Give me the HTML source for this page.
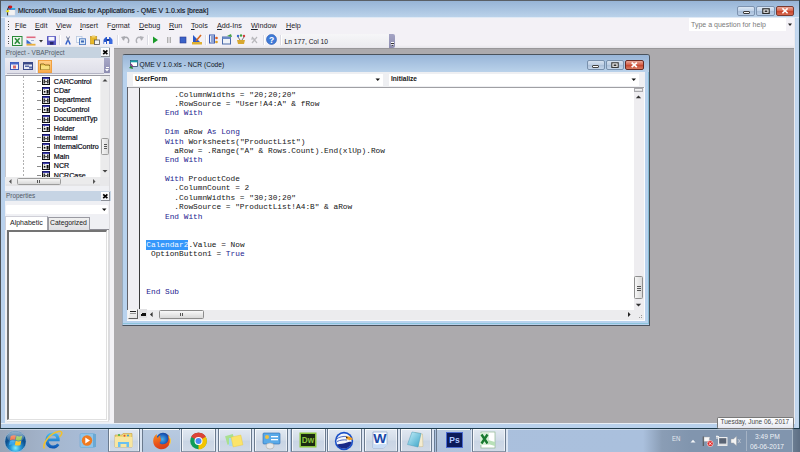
<!DOCTYPE html>
<html><head><meta charset="utf-8"><style>
*{margin:0;padding:0;box-sizing:border-box}
html,body{width:800px;height:452px;overflow:hidden;background:#aaa8ab;font-family:"Liberation Sans",sans-serif}
.a{position:absolute}
.t{position:absolute;white-space:pre;line-height:1}
.cl{position:absolute;left:146.3px;font-family:"Liberation Mono",monospace;font-size:7.81px;line-height:7.81px;white-space:pre;color:#151515}
.cl b{font-weight:normal;color:#23238f}
.sel{background:#3399ff;color:#e0ecff}
.u{text-decoration:underline;text-underline-offset:1px}
</style></head><body>
<div class="a" style="left:0px;top:0px;width:800px;height:429px;background:linear-gradient(90deg,#b9d1ec 0,#b9d1ec 795px,#c8dbf0 797px,#b9d1ec 799px)"></div>
<div class="a" style="left:0px;top:0px;width:800px;height:1px;background:#5a5f66"></div>
<div class="a" style="left:0px;top:0px;width:1px;height:429px;background:#4d5258"></div>
<div class="a" style="left:799px;top:0px;width:1px;height:429px;background:#2a4654"></div>
<div class="a" style="left:1px;top:1px;width:798px;height:16px;background:linear-gradient(#97b4d6,#bad2ea)"></div>
<div class="a" style="left:1px;top:17px;width:798px;height:1px;background:#dfe9f5"></div>
<div class="a" style="left:5px;top:18px;width:790px;height:30px;background:linear-gradient(#f3f1f6 0,#f3f1f6 27px,#e6e5ea 30px)"></div>
<div class="a" style="left:114px;top:48px;width:680px;height:375px;background:#acaaad"></div>
<div class="a" style="left:114px;top:48px;width:680px;height:1px;background:#98979a"></div>
<div class="a" style="left:5px;top:48px;width:109px;height:375px;background:#eff0f4"></div>
<div class="a" style="left:794px;top:18px;width:1px;height:405px;background:#ecebef"></div>
<div class="a" style="left:1px;top:423px;width:794px;height:1px;background:#e8eef6"></div>
<div class="a" style="left:0px;top:428px;width:800px;height:1px;background:#2a4a5c"></div>
<svg class="a" style="left:5px;top:5px;" width="12" height="11" viewBox="0 0 12 11"><rect x="3" y="4.3" width="7" height="5.8" fill="#f2f2f2" stroke="#d8d8e0" stroke-width="0.4"/><rect x="3" y="3.2" width="7.2" height="1.5" fill="#2a4ab8"/><rect x="6.2" y="3.2" width="3.8" height="1.2" fill="#20c8e8"/><ellipse cx="5.2" cy="2" rx="2.1" ry="1.4" fill="#d01818"/><path d="M4 1.5 L2.6 3.8" stroke="#111" stroke-width="0.8"/><rect x="2.2" y="4" width="0.9" height="6.4" fill="#151515"/><path d="M0.5 6.2 L3.2 4.6 L4.6 6.6 L2.4 7.6Z" fill="#e8e020"/></svg>
<div class="t" style="left:18px;top:8.02px;font-size:6.95px;color:#10131a;font-family:'Liberation Sans',sans-serif;-webkit-text-stroke:0.15px #10131a">Microsoft Visual Basic for Applications - QME V 1.0.xls [break]</div>
<div class="a" style="left:737px;top:6px;width:18px;height:10px;border:1px solid #7d93b0;border-radius:2px;background:linear-gradient(#dde8f4,#c2d4ea 45%,#a9bfda 55%,#bcd0e8)"></div>
<div class="a" style="left:742.5px;top:10.5px;width:7px;height:3px;background:#fafafa;border:1px solid #3a3a3a;border-radius:1px"></div>
<div class="a" style="left:756px;top:6px;width:19px;height:10px;border:1px solid #7d93b0;border-radius:2px;background:linear-gradient(#dde8f4,#c2d4ea 45%,#a9bfda 55%,#bcd0e8)"></div>
<svg class="a" style="left:761.5px;top:8px;" width="8" height="6" viewBox="0 0 8 6"><rect x="0.8" y="0.8" width="6.4" height="4.6" fill="#fafafa" stroke="#2a2a2a" stroke-width="1.2"/><rect x="2.6" y="2.4" width="2.8" height="1.6" fill="#333"/></svg>
<div class="a" style="left:776px;top:6px;width:18px;height:10px;border:1px solid #7a3a30;border-radius:2px;background:linear-gradient(#eba898,#d86850 45%,#c8442c 55%,#d86a50)"></div>
<svg class="a" style="left:776px;top:6px;" width="18" height="10" viewBox="0 0 18 10"><path d="M6.4 2.4 L11.6 7.2 M11.6 2.4 L6.4 7.2" stroke="#fff" stroke-width="1.5"/></svg>
<div class="a" style="left:8px;top:21px;width:1px;height:1px;background:#555"></div>
<div class="a" style="left:8px;top:23.5px;width:1px;height:1px;background:#555"></div>
<div class="a" style="left:8px;top:26px;width:1px;height:1px;background:#555"></div>
<div class="a" style="left:8px;top:28.5px;width:1px;height:1px;background:#555"></div>
<div class="t" style="left:15px;top:22.21px;font-size:7.2px;color:#1e2129;font-family:'Liberation Sans',sans-serif;"><span class="u">F</span>ile</div>
<div class="t" style="left:35px;top:22.21px;font-size:7.2px;color:#1e2129;font-family:'Liberation Sans',sans-serif;"><span class="u">E</span>dit</div>
<div class="t" style="left:56px;top:22.21px;font-size:7.2px;color:#1e2129;font-family:'Liberation Sans',sans-serif;"><span class="u">V</span>iew</div>
<div class="t" style="left:80px;top:22.21px;font-size:7.2px;color:#1e2129;font-family:'Liberation Sans',sans-serif;"><span class="u">I</span>nsert</div>
<div class="t" style="left:107px;top:22.21px;font-size:7.2px;color:#1e2129;font-family:'Liberation Sans',sans-serif;">F<span class="u">o</span>rmat</div>
<div class="t" style="left:139px;top:22.21px;font-size:7.2px;color:#1e2129;font-family:'Liberation Sans',sans-serif;"><span class="u">D</span>ebug</div>
<div class="t" style="left:169px;top:22.21px;font-size:7.2px;color:#1e2129;font-family:'Liberation Sans',sans-serif;"><span class="u">R</span>un</div>
<div class="t" style="left:191px;top:22.21px;font-size:7.2px;color:#1e2129;font-family:'Liberation Sans',sans-serif;"><span class="u">T</span>ools</div>
<div class="t" style="left:217px;top:22.21px;font-size:7.2px;color:#1e2129;font-family:'Liberation Sans',sans-serif;"><span class="u">A</span>dd-Ins</div>
<div class="t" style="left:251px;top:22.21px;font-size:7.2px;color:#1e2129;font-family:'Liberation Sans',sans-serif;"><span class="u">W</span>indow</div>
<div class="t" style="left:286px;top:22.21px;font-size:7.2px;color:#1e2129;font-family:'Liberation Sans',sans-serif;"><span class="u">H</span>elp</div>
<div class="a" style="left:689px;top:18px;width:97px;height:13px;background:#fff"></div>
<div class="t" style="left:691px;top:21.35px;font-size:7.03px;color:#7a7a7a;font-family:'Liberation Sans',sans-serif;">Type a question for help</div>
<svg class="a" style="left:788px;top:23px;" width="5" height="4" viewBox="0 0 5 4"><path d="M0 0.5 H4 L2 3Z" fill="#222"/></svg>
<div class="a" style="left:8px;top:35.5px;width:1px;height:1px;background:#555"></div>
<div class="a" style="left:8px;top:38px;width:1px;height:1px;background:#555"></div>
<div class="a" style="left:8px;top:40.5px;width:1px;height:1px;background:#555"></div>
<div class="a" style="left:8px;top:43px;width:1px;height:1px;background:#555"></div>
<svg class="a" style="left:12px;top:35.5px;" width="10.5" height="10" viewBox="0 0 10.5 10"><rect x="0.5" y="0.5" width="9.5" height="9" fill="#eef6ee" stroke="#2a8a3a" stroke-width="1"/><path d="M3 2.2 L7.8 7.8 M7.6 2.2 L2.8 7.8" stroke="#2a8a38" stroke-width="1.5"/></svg>
<svg class="a" style="left:26px;top:35.5px;" width="10" height="10" viewBox="0 0 10 10"><rect x="0.5" y="0.5" width="9" height="1.8" fill="#e06a80"/><rect x="0.5" y="2.3" width="9" height="5.5" fill="#eef2f8"/><path d="M0.5 3.5 L6 7.8 H0.5Z" fill="#3a6ad0"/><rect x="0.5" y="7.8" width="9" height="1.8" fill="#e8b040"/><path d="M5 4.5 H8" stroke="#8aa0c8" stroke-width="0.8"/></svg>
<svg class="a" style="left:39px;top:39.5px;" width="4" height="3" viewBox="0 0 4 3"><path d="M0 0 H4 L2 2.5Z" fill="#333"/></svg>
<svg class="a" style="left:46.5px;top:36px;" width="9" height="9" viewBox="0 0 9 9"><rect x="0" y="0" width="9" height="9" rx="0.6" fill="#5656c0"/><rect x="1.5" y="0.8" width="6" height="3.8" fill="#f6f6ff"/><rect x="3" y="6" width="3.5" height="2.6" fill="#26266a"/></svg>
<div class="a" style="left:59px;top:35px;width:1px;height:10px;background:#dcdce4"></div>
<div class="a" style="left:60px;top:35px;width:1px;height:10px;background:#fff"></div>
<svg class="a" style="left:64px;top:36px;" width="8" height="9" viewBox="0 0 8 9"><path d="M2.5 0.5 L4.5 5 M5.5 0.5 L3.5 5" stroke="#5a6a90" stroke-width="0.9"/><path d="M3.5 4.5 L1.8 8.5" stroke="#2a5ac8" stroke-width="1.4"/><path d="M4.5 4.5 L6.2 8.5" stroke="#2a5ac8" stroke-width="1.4"/></svg>
<svg class="a" style="left:76px;top:36px;" width="10" height="9" viewBox="0 0 10 9"><rect x="0.5" y="0.5" width="5.5" height="6" fill="#f4f8fc" stroke="#b8c8e0" stroke-width="0.8"/><rect x="3.5" y="2.8" width="6" height="5.8" fill="#dce8f6" stroke="#4a78c0" stroke-width="0.9"/><rect x="5" y="4.5" width="3" height="2" fill="#3a68b8"/></svg>
<svg class="a" style="left:90px;top:35px;" width="10" height="10" viewBox="0 0 10 10"><rect x="0.3" y="1.5" width="6.5" height="7.5" fill="#e8b828" stroke="#b88a10" stroke-width="0.5"/><rect x="2" y="0.5" width="3.2" height="2" fill="#f0d070"/><rect x="4.5" y="5" width="5" height="4.5" fill="#f4f4f4" stroke="#555" stroke-width="0.8"/></svg>
<svg class="a" style="left:103px;top:36px;" width="10" height="9" viewBox="0 0 10 9"><path d="M1 3 L3 1 H4 V8 H0.5 V4Z" fill="#2a5ad0"/><path d="M9 3 L7 1 H6 V8 H9.5 V4Z" fill="#3a6ae0"/><rect x="3.5" y="3" width="3" height="2" fill="#1a3a98"/><rect x="1.2" y="6" width="1.8" height="2" fill="#fff"/></svg>
<div class="a" style="left:117px;top:35px;width:1px;height:10px;background:#dcdce4"></div>
<div class="a" style="left:118px;top:35px;width:1px;height:10px;background:#fff"></div>
<svg class="a" style="left:121px;top:35px;" width="9" height="10" viewBox="0 0 9 10"><path d="M7 8 C9 4 6 1 3 3 L2 5" stroke="#a8a8ae" stroke-width="1.4" fill="none"/><path d="M0 2 L3 6 L4 1Z" fill="#a8a8ae"/></svg>
<svg class="a" style="left:135px;top:35px;" width="9" height="10" viewBox="0 0 9 10"><path d="M2 8 C0 4 3 1 6 3 L7 5" stroke="#b0b0b6" stroke-width="1.4" fill="none"/><path d="M9 2 L6 6 L5 1Z" fill="#b0b0b6"/></svg>
<div class="a" style="left:147px;top:35px;width:1px;height:10px;background:#dcdce4"></div>
<div class="a" style="left:148px;top:35px;width:1px;height:10px;background:#fff"></div>
<svg class="a" style="left:152px;top:35px;" width="7" height="10" viewBox="0 0 7 10"><path d="M1 1.5 L6 5 L1 8.5Z" fill="#1a9a2a"/></svg>
<svg class="a" style="left:166px;top:35px;" width="6" height="10" viewBox="0 0 6 10"><rect x="1" y="2" width="1.4" height="6" fill="#b0b0b0"/><rect x="3.6" y="2" width="1.4" height="6" fill="#b0b0b0"/></svg>
<svg class="a" style="left:179px;top:35px;" width="8" height="10" viewBox="0 0 8 10"><rect x="1" y="2" width="6" height="6" fill="#3a62c8" stroke="#2a3a90" stroke-width="0.6"/></svg>
<svg class="a" style="left:192px;top:34px;" width="11" height="11" viewBox="0 0 11 11"><path d="M1 1 L1 8 L8 8Z" fill="#2a58c8"/><path d="M4 7 L9 1" stroke="#d86a20" stroke-width="1.6"/><rect x="0" y="8" width="10" height="2.5" fill="#e0b030"/></svg>
<div class="a" style="left:205px;top:35px;width:1px;height:10px;background:#dcdce4"></div>
<div class="a" style="left:206px;top:35px;width:1px;height:10px;background:#fff"></div>
<svg class="a" style="left:209px;top:34px;" width="10" height="11" viewBox="0 0 10 11"><rect x="0.5" y="1" width="5" height="8" fill="#e8eef8" stroke="#3a5ab0"/><path d="M2 3 H5 M2 5 H5 M2 7 H5" stroke="#3a5ab0"/><circle cx="7.5" cy="4" r="1.3" fill="#e06020"/><circle cx="7.5" cy="8" r="1.3" fill="#e0a020"/></svg>
<svg class="a" style="left:222px;top:34px;" width="10" height="11" viewBox="0 0 10 11"><rect x="0.5" y="3" width="8" height="7" fill="#eef2f8" stroke="#4a6aa8"/><rect x="0.5" y="3" width="8" height="2" fill="#6a8ac8"/><path d="M5 2 L9 0 L10 3Z" fill="#40a040"/></svg>
<svg class="a" style="left:236px;top:34px;" width="10" height="11" viewBox="0 0 10 11"><path d="M1 6 H9 L8 10 H2Z" fill="#d8a830"/><circle cx="2" cy="2" r="1.2" fill="#3a6ad0"/><circle cx="5" cy="1.5" r="1.2" fill="#40a040"/><circle cx="8" cy="2" r="1.2" fill="#d04040"/><path d="M2 3 L4 6 M8 3 L6 6" stroke="#777"/></svg>
<svg class="a" style="left:250px;top:35px;" width="9" height="10" viewBox="0 0 9 10"><path d="M2 2 L7 8 M7 2 L2 8 M1 4 H5" stroke="#b8b8bc" stroke-width="1.2"/></svg>
<div class="a" style="left:263px;top:35px;width:1px;height:10px;background:#dcdce4"></div>
<div class="a" style="left:264px;top:35px;width:1px;height:10px;background:#fff"></div>
<svg class="a" style="left:266px;top:34px;" width="11" height="11" viewBox="0 0 11 11"><circle cx="5.5" cy="5.5" r="5" fill="#3f7ad8" stroke="#2a5ab0" stroke-width="0.6"/><text x="5.5" y="8.6" font-size="8.5" font-family="Liberation Sans" font-weight="bold" fill="#fff" text-anchor="middle">?</text></svg>
<div class="a" style="left:280px;top:35px;width:1px;height:10px;background:#dcdce4"></div>
<div class="a" style="left:281px;top:35px;width:1px;height:10px;background:#fff"></div>
<div class="a" style="left:282px;top:34px;width:107px;height:12px;background:linear-gradient(#f6f6f8,#ececf0)"></div>
<div class="t" style="left:284.5px;top:38.73px;font-size:6.7px;color:#15151c;font-family:'Liberation Sans',sans-serif;">Ln 177, Col 10</div>
<div class="a" style="left:389px;top:34px;width:6px;height:14px;background:linear-gradient(#a4a4c4,#8c8cb0);border-radius:0 2px 2px 0"></div>
<div class="a" style="left:390.5px;top:42px;width:3.2px;height:1px;background:#fff"></div>
<div class="a" style="left:390.5px;top:43px;width:3.2px;height:0.8px;background:#333"></div>
<svg class="a" style="left:390px;top:44.3px;" width="5" height="3" viewBox="0 0 5 3"><path d="M0.5 0.3 H4.2 L2.35 2.4Z" fill="#fff"/><path d="M1.2 0.9 H3.5 L2.35 2.2Z" fill="#333"/></svg>
<div class="a" style="left:5px;top:47px;width:106px;height:11px;background:#c6d3e0"></div>
<div class="t" style="left:5.7px;top:49.52px;font-size:6.47px;color:#525a66;font-family:'Liberation Sans',sans-serif;">Project - VBAProject</div>
<div class="a" style="left:101px;top:48px;width:9px;height:8.5px;background:linear-gradient(#ffffff,#f0f2f6);border-right:1px solid #8c9098;border-bottom:1px solid #8c9098"></div>
<svg class="a" style="left:101px;top:48px;" width="9" height="9" viewBox="0 0 9 9"><path d="M2.2 2.4 L6.4 6.2 M6.4 2.4 L2.2 6.2" stroke="#000" stroke-width="1.7"/></svg>
<div class="a" style="left:5px;top:58px;width:106px;height:16px;background:linear-gradient(#ececf2,#dedee8)"></div>
<div class="a" style="left:7px;top:73px;width:97px;height:1px;background:#b4b4c4"></div>
<svg class="a" style="left:10px;top:62px;" width="9" height="8" viewBox="0 0 9 8"><rect x="0.5" y="0.5" width="8" height="7" fill="#f4f0f4" stroke="#3a5ab8"/><rect x="0.5" y="0.5" width="8" height="2" fill="#4a6ac8"/><rect x="3" y="3.5" width="3" height="3" fill="#d86a6a"/></svg>
<svg class="a" style="left:23px;top:62px;" width="10" height="8" viewBox="0 0 10 8"><rect x="0.5" y="0.5" width="9" height="7" fill="#e8ecf4" stroke="#3a4a88"/><rect x="0.5" y="0.5" width="9" height="2" fill="#3a4a88"/><rect x="2" y="3.5" width="4" height="1.5" fill="#5a6aa8"/><rect x="6" y="4.5" width="3" height="2" fill="#5a6aa8"/></svg>
<div class="a" style="left:36px;top:60px;width:1px;height:13px;background:#fafafc"></div>
<div class="a" style="left:38px;top:60px;width:14px;height:13px;background:linear-gradient(#ffd089,#f9a94a);border:1px solid #f0a040"></div>
<svg class="a" style="left:40px;top:63px;" width="10" height="7" viewBox="0 0 10 7"><path d="M0.5 1 H4 L5 2 H9.5 V6.5 H0.5Z" fill="#f2d060" stroke="#7a5a10" stroke-width="0.8"/><rect x="1" y="3" width="8.5" height="3.5" fill="#f8e080"/></svg>
<div class="a" style="left:104px;top:58px;width:7px;height:15px;background:linear-gradient(#a8a8c8,#8c8cb0);border-radius:0 2px 2px 0"></div>
<div class="a" style="left:105.5px;top:67px;width:3px;height:1px;background:#fff"></div>
<svg class="a" style="left:105px;top:68.5px;" width="4" height="3" viewBox="0 0 4 3"><path d="M0 0 H4 L2 2.5Z" fill="#fff"/></svg>
<div class="a" style="left:5px;top:75px;width:105px;height:111px;background:#fff;border-top:1px solid #9a9aa2;border-left:1px solid #c8c8cc"></div>
<div class="a" style="left:23px;top:76px;width:1px;height:101px;background:repeating-linear-gradient(#b0b0b0 0 2px,transparent 2px 3.5px)"></div>
<div class="a" style="left:36.5px;top:81.0px;width:4px;height:1px;background:#8a8a8a"></div>
<svg class="a" style="left:42px;top:77.2px;" width="8" height="8" viewBox="0 0 8 8"><rect x="0.5" y="0.5" width="7" height="7" fill="#f0f0f0" stroke="#111"/><rect x="0.5" y="0.3" width="7" height="1.5" fill="#1a1aa0"/><rect x="1.5" y="2.5" width="1.6" height="4" fill="#333"/><rect x="5" y="2.5" width="1.6" height="4" fill="#333"/><rect x="2.5" y="4" width="3" height="1.2" fill="#555"/></svg>
<div class="t" style="left:53.8px;top:78.69px;font-size:7.1px;color:#0a0a14;font-family:'Liberation Sans',sans-serif;-webkit-text-stroke:0.2px #0a0a14">CARControl</div>
<div class="a" style="left:36.5px;top:90.4px;width:4px;height:1px;background:#8a8a8a"></div>
<svg class="a" style="left:42px;top:86.60000000000001px;" width="8" height="8" viewBox="0 0 8 8"><rect x="0.5" y="0.5" width="7" height="7" fill="#f0f0f0" stroke="#111"/><rect x="0.5" y="0.3" width="7" height="1.5" fill="#1a1aa0"/><rect x="1.8" y="4" width="1.6" height="1.6" fill="#111"/><rect x="4.6" y="3" width="2" height="3.6" fill="#111"/><rect x="1.8" y="2.4" width="1.2" height="0.8" fill="#666"/></svg>
<div class="t" style="left:53.8px;top:88.09px;font-size:7.1px;color:#0a0a14;font-family:'Liberation Sans',sans-serif;-webkit-text-stroke:0.2px #0a0a14">CDar</div>
<div class="a" style="left:36.5px;top:99.8px;width:4px;height:1px;background:#8a8a8a"></div>
<svg class="a" style="left:42px;top:96.0px;" width="8" height="8" viewBox="0 0 8 8"><rect x="0.5" y="0.5" width="7" height="7" fill="#f0f0f0" stroke="#111"/><rect x="0.5" y="0.3" width="7" height="1.5" fill="#1a1aa0"/><rect x="1.5" y="2.5" width="1.6" height="4" fill="#333"/><rect x="5" y="2.5" width="1.6" height="4" fill="#333"/><rect x="2.5" y="4" width="3" height="1.2" fill="#555"/></svg>
<div class="t" style="left:53.8px;top:97.49px;font-size:7.1px;color:#0a0a14;font-family:'Liberation Sans',sans-serif;-webkit-text-stroke:0.2px #0a0a14">Department</div>
<div class="a" style="left:36.5px;top:109.2px;width:4px;height:1px;background:#8a8a8a"></div>
<svg class="a" style="left:42px;top:105.4px;" width="8" height="8" viewBox="0 0 8 8"><rect x="0.5" y="0.5" width="7" height="7" fill="#f0f0f0" stroke="#111"/><rect x="0.5" y="0.3" width="7" height="1.5" fill="#1a1aa0"/><rect x="1.8" y="4" width="1.6" height="1.6" fill="#111"/><rect x="4.6" y="3" width="2" height="3.6" fill="#111"/><rect x="1.8" y="2.4" width="1.2" height="0.8" fill="#666"/></svg>
<div class="t" style="left:53.8px;top:106.89px;font-size:7.1px;color:#0a0a14;font-family:'Liberation Sans',sans-serif;-webkit-text-stroke:0.2px #0a0a14">DocControl</div>
<div class="a" style="left:36.5px;top:118.60000000000001px;width:4px;height:1px;background:#8a8a8a"></div>
<svg class="a" style="left:42px;top:114.80000000000001px;" width="8" height="8" viewBox="0 0 8 8"><rect x="0.5" y="0.5" width="7" height="7" fill="#f0f0f0" stroke="#111"/><rect x="0.5" y="0.3" width="7" height="1.5" fill="#1a1aa0"/><rect x="1.5" y="2.5" width="1.6" height="4" fill="#333"/><rect x="5" y="2.5" width="1.6" height="4" fill="#333"/><rect x="2.5" y="4" width="3" height="1.2" fill="#555"/></svg>
<div class="t" style="left:53.8px;top:116.29px;font-size:7.1px;color:#0a0a14;font-family:'Liberation Sans',sans-serif;-webkit-text-stroke:0.2px #0a0a14">DocumentTyp</div>
<div class="a" style="left:36.5px;top:127.99999999999999px;width:4px;height:1px;background:#8a8a8a"></div>
<svg class="a" style="left:42px;top:124.19999999999999px;" width="8" height="8" viewBox="0 0 8 8"><rect x="0.5" y="0.5" width="7" height="7" fill="#f0f0f0" stroke="#111"/><rect x="0.5" y="0.3" width="7" height="1.5" fill="#1a1aa0"/><rect x="1.8" y="4" width="1.6" height="1.6" fill="#111"/><rect x="4.6" y="3" width="2" height="3.6" fill="#111"/><rect x="1.8" y="2.4" width="1.2" height="0.8" fill="#666"/></svg>
<div class="t" style="left:53.8px;top:125.69px;font-size:7.1px;color:#0a0a14;font-family:'Liberation Sans',sans-serif;-webkit-text-stroke:0.2px #0a0a14">Holder</div>
<div class="a" style="left:36.5px;top:137.40000000000003px;width:4px;height:1px;background:#8a8a8a"></div>
<svg class="a" style="left:42px;top:133.60000000000002px;" width="8" height="8" viewBox="0 0 8 8"><rect x="0.5" y="0.5" width="7" height="7" fill="#f0f0f0" stroke="#111"/><rect x="0.5" y="0.3" width="7" height="1.5" fill="#1a1aa0"/><rect x="1.5" y="2.5" width="1.6" height="4" fill="#333"/><rect x="5" y="2.5" width="1.6" height="4" fill="#333"/><rect x="2.5" y="4" width="3" height="1.2" fill="#555"/></svg>
<div class="t" style="left:53.8px;top:135.09px;font-size:7.1px;color:#0a0a14;font-family:'Liberation Sans',sans-serif;-webkit-text-stroke:0.2px #0a0a14">Internal</div>
<div class="a" style="left:36.5px;top:146.8px;width:4px;height:1px;background:#8a8a8a"></div>
<svg class="a" style="left:42px;top:143.0px;" width="8" height="8" viewBox="0 0 8 8"><rect x="0.5" y="0.5" width="7" height="7" fill="#f0f0f0" stroke="#111"/><rect x="0.5" y="0.3" width="7" height="1.5" fill="#1a1aa0"/><rect x="1.8" y="4" width="1.6" height="1.6" fill="#111"/><rect x="4.6" y="3" width="2" height="3.6" fill="#111"/><rect x="1.8" y="2.4" width="1.2" height="0.8" fill="#666"/></svg>
<div class="t" style="left:53.8px;top:144.49px;font-size:7.1px;color:#0a0a14;font-family:'Liberation Sans',sans-serif;-webkit-text-stroke:0.2px #0a0a14">InternalContro</div>
<div class="a" style="left:36.5px;top:156.20000000000002px;width:4px;height:1px;background:#8a8a8a"></div>
<svg class="a" style="left:42px;top:152.4px;" width="8" height="8" viewBox="0 0 8 8"><rect x="0.5" y="0.5" width="7" height="7" fill="#f0f0f0" stroke="#111"/><rect x="0.5" y="0.3" width="7" height="1.5" fill="#1a1aa0"/><rect x="1.5" y="2.5" width="1.6" height="4" fill="#333"/><rect x="5" y="2.5" width="1.6" height="4" fill="#333"/><rect x="2.5" y="4" width="3" height="1.2" fill="#555"/></svg>
<div class="t" style="left:53.8px;top:153.89px;font-size:7.1px;color:#0a0a14;font-family:'Liberation Sans',sans-serif;-webkit-text-stroke:0.2px #0a0a14">Main</div>
<div class="a" style="left:36.5px;top:165.60000000000002px;width:4px;height:1px;background:#8a8a8a"></div>
<svg class="a" style="left:42px;top:161.8px;" width="8" height="8" viewBox="0 0 8 8"><rect x="0.5" y="0.5" width="7" height="7" fill="#f0f0f0" stroke="#111"/><rect x="0.5" y="0.3" width="7" height="1.5" fill="#1a1aa0"/><rect x="1.8" y="4" width="1.6" height="1.6" fill="#111"/><rect x="4.6" y="3" width="2" height="3.6" fill="#111"/><rect x="1.8" y="2.4" width="1.2" height="0.8" fill="#666"/></svg>
<div class="t" style="left:53.8px;top:163.29px;font-size:7.1px;color:#0a0a14;font-family:'Liberation Sans',sans-serif;-webkit-text-stroke:0.2px #0a0a14">NCR</div>
<div class="a" style="left:36.5px;top:175.0px;width:4px;height:1px;background:#8a8a8a"></div>
<svg class="a" style="left:42px;top:171.2px;" width="8" height="8" viewBox="0 0 8 8"><rect x="0.5" y="0.5" width="7" height="7" fill="#f0f0f0" stroke="#111"/><rect x="0.5" y="0.3" width="7" height="1.5" fill="#1a1aa0"/><rect x="1.5" y="2.5" width="1.6" height="4" fill="#333"/><rect x="5" y="2.5" width="1.6" height="4" fill="#333"/><rect x="2.5" y="4" width="3" height="1.2" fill="#555"/></svg>
<div class="t" style="left:53.8px;top:172.69px;font-size:7.1px;color:#0a0a14;font-family:'Liberation Sans',sans-serif;-webkit-text-stroke:0.2px #0a0a14">NCRCase</div>
<div class="a" style="left:100px;top:76px;width:10px;height:101px;background:#ebebec;border-left:1px solid #f2f2f2"></div>
<svg class="a" style="left:102px;top:78px;" width="6" height="5" viewBox="0 0 6 5"><path d="M0.5 3.5 L3 1 L5.5 3.5Z" fill="#444"/></svg>
<svg class="a" style="left:102px;top:169px;" width="6" height="5" viewBox="0 0 6 5"><path d="M0.5 1 L3 3.5 L5.5 1Z" fill="#444"/></svg>
<div class="a" style="left:101px;top:138px;width:8px;height:16.5px;background:linear-gradient(90deg,#f4f4f4,#dcdcdc);border:1px solid #9c9c9c;border-radius:1.5px"></div>
<div class="a" style="left:103.5px;top:144px;width:3px;height:0.8px;background:#555"></div>
<div class="a" style="left:103.5px;top:146px;width:3px;height:0.8px;background:#555"></div>
<div class="a" style="left:103.5px;top:148px;width:3px;height:0.8px;background:#555"></div>
<div class="a" style="left:5px;top:177px;width:105px;height:9px;background:#ebebec"></div>
<div class="a" style="left:6px;top:184px;width:104px;height:2px;background:#e4e4e6"></div>
<svg class="a" style="left:8px;top:178px;" width="5" height="7" viewBox="0 0 5 7"><path d="M3.5 1 L1 3.5 L3.5 6Z" fill="#555"/></svg>
<svg class="a" style="left:92px;top:178px;" width="5" height="7" viewBox="0 0 5 7"><path d="M1 1 L3.5 3.5 L1 6Z" fill="#555"/></svg>
<div class="a" style="left:16.5px;top:178px;width:44px;height:7px;background:linear-gradient(#f6f6f6,#d8d8d8);border:1px solid #9c9c9c;border-radius:1.5px"></div>
<div class="a" style="left:37px;top:180px;width:0.8px;height:3px;background:#555"></div>
<div class="a" style="left:39px;top:180px;width:0.8px;height:3px;background:#555"></div>
<div class="a" style="left:100px;top:177px;width:10px;height:9px;background:#e8e8ea"></div>
<div class="a" style="left:110px;top:47px;width:4px;height:376px;background:#f3f2f6"></div>
<div class="a" style="left:109px;top:76px;width:1px;height:344px;background:#dcdce0"></div>
<div class="a" style="left:5px;top:191px;width:106px;height:10px;background:#c6d4e4"></div>
<div class="t" style="left:6px;top:192.58px;font-size:6.4px;color:#525a66;font-family:'Liberation Sans',sans-serif;">Properties</div>
<div class="a" style="left:101px;top:192px;width:9px;height:8.5px;background:linear-gradient(#ffffff,#f0f2f6);border-right:1px solid #8c9098;border-bottom:1px solid #8c9098"></div>
<svg class="a" style="left:101px;top:192px;" width="9" height="9" viewBox="0 0 9 9"><path d="M2.2 2.4 L6.4 6.2 M6.4 2.4 L2.2 6.2" stroke="#000" stroke-width="1.7"/></svg>
<div class="a" style="left:5px;top:204px;width:104px;height:11px;background:#fff;border-radius:2px;border:1px solid #f0f0f4"></div>
<svg class="a" style="left:102px;top:208px;" width="5" height="4" viewBox="0 0 5 4"><path d="M0 0.5 H4.5 L2.25 3Z" fill="#111"/></svg>
<div class="a" style="left:5px;top:229px;width:104px;height:1px;background:#8c8c94"></div>
<div class="a" style="left:47.5px;top:217px;width:42px;height:13px;background:linear-gradient(#f0f0f0,#e0e0e4);border:1px solid #9a9aa2;border-bottom:none"></div>
<div class="a" style="left:5px;top:216px;width:43px;height:14px;background:#fff;border:1px solid #d0d0d8;border-right:1px solid #a0a0a8;border-bottom:none"></div>
<div class="t" style="left:10px;top:219.37px;font-size:7.0px;color:#1a1a1a;font-family:'Liberation Sans',sans-serif;">Alphabetic</div>
<div class="t" style="left:50px;top:220.40px;font-size:6.85px;color:#1a1a1a;font-family:'Liberation Sans',sans-serif;">Categorized</div>
<div class="a" style="left:7px;top:229.5px;width:102px;height:192px;background:#fff;border-right:1px solid #dcdcdc;border-bottom:1px solid #e4e4e4"></div>
<div class="a" style="left:7px;top:229.5px;width:100px;height:190.5px;background:#fff;border-left:2px solid #6e6e6e;border-top:2px solid #747474;border-right:1px solid #e0e0e0;border-bottom:1px solid #e0e0e0"></div>
<div class="a" style="left:122px;top:54px;width:528px;height:272px;background:#b8d2ee;border:1px solid #4a525c;border-left-color:#9aaabb;border-radius:3px 3px 0 0"></div>
<div class="a" style="left:648px;top:72px;width:1px;height:252px;background:#88bcd4"></div>
<div class="a" style="left:123px;top:323px;width:525px;height:1px;background:#8cc4dc"></div>
<div class="a" style="left:123px;top:55px;width:526px;height:17px;background:linear-gradient(#98b5d8,#bad2ea);border-radius:2px 2px 0 0"></div>
<svg class="a" style="left:128px;top:60px;" width="10" height="10" viewBox="0 0 10 10"><rect x="2.5" y="0.5" width="7" height="6" fill="#fff" stroke="#2a4a6a" stroke-width="0.8"/><rect x="2.5" y="0.5" width="7" height="1.8" fill="#18a0a8"/><path d="M1 8 L4 5 L5 9Z" fill="#2a8a3a"/><path d="M3 4 L5 7" stroke="#8a2a8a" stroke-width="1.3"/></svg>
<div class="t" style="left:139.5px;top:62.29px;font-size:6.63px;color:#0e1420;font-family:'Liberation Sans',sans-serif;">QME V 1.0.xls - NCR (Code)</div>
<div class="a" style="left:586.5px;top:60px;width:18px;height:10px;border:1px solid #7890ac;border-radius:2px;background:linear-gradient(#d6e2f0,#bccee4 50%,#aabfd8 51%,#c4d6ec)"></div>
<div class="a" style="left:592.0px;top:65px;width:7px;height:2.5px;background:#fff;border:1px solid #444;border-radius:1px"></div>
<div class="a" style="left:606px;top:60px;width:18px;height:10px;border:1px solid #7890ac;border-radius:2px;background:linear-gradient(#d6e2f0,#bccee4 50%,#aabfd8 51%,#c4d6ec)"></div>
<svg class="a" style="left:611.0px;top:62px;" width="8" height="6" viewBox="0 0 8 6"><rect x="0.8" y="0.8" width="6.4" height="4.6" fill="#fafafa" stroke="#333" stroke-width="1.1"/><rect x="2.6" y="2.4" width="2.8" height="1.6" fill="#333"/></svg>
<div class="a" style="left:625px;top:60px;width:18.5px;height:10px;border:1px solid #6a2a24;border-radius:2px;background:linear-gradient(#eaa898,#d45a44 50%,#c4442e 51%,#dc7c62)"></div>
<svg class="a" style="left:625px;top:60px;" width="18.5" height="10" viewBox="0 0 18.5 10"><path d="M6.65 2.6 L11.85 7.2 M11.85 2.6 L6.65 7.2" stroke="#fff" stroke-width="1.7"/></svg>
<div class="a" style="left:127px;top:72px;width:518px;height:249px;background:#eeeff2"></div>
<div class="a" style="left:132.5px;top:73.5px;width:250px;height:12px;background:#fff"></div>
<div class="a" style="left:388.5px;top:73.5px;width:250px;height:12px;background:#fff"></div>
<div class="t" style="left:135px;top:75.51px;font-size:6.84px;color:#151515;font-family:'Liberation Sans',sans-serif;font-weight:bold">UserForm</div>
<div class="t" style="left:391px;top:75.71px;font-size:6.6px;color:#151515;font-family:'Liberation Sans',sans-serif;font-weight:bold">Initialize</div>
<svg class="a" style="left:375px;top:78px;" width="6" height="4" viewBox="0 0 6 4"><path d="M0.5 0.5 H5 L2.75 3Z" fill="#111"/></svg>
<svg class="a" style="left:631px;top:78px;" width="6" height="4" viewBox="0 0 6 4"><path d="M0.5 0.5 H5 L2.75 3Z" fill="#111"/></svg>
<div class="a" style="left:127px;top:87px;width:518px;height:1px;background:#a0a0a4"></div>
<div class="a" style="left:139px;top:88px;width:495px;height:222px;background:#fff"></div>
<div class="a" style="left:127px;top:88px;width:12px;height:222px;background:#f0eff3"></div>
<div class="a" style="left:127px;top:87px;width:1px;height:223px;background:#606068"></div>
<div class="a" style="left:139px;top:88px;width:1px;height:222px;background:#3a3a3a"></div>
<div class="a" style="left:634px;top:88px;width:10px;height:222px;background:#eeedf0"></div>
<div class="a" style="left:644px;top:87px;width:1px;height:234px;background:#fafcfd"></div>
<div class="a" style="left:634px;top:87.5px;width:9px;height:4.5px;background:linear-gradient(#fdfdfd,#d6d6d8);border:1px solid #a8a8ac"></div>
<svg class="a" style="left:635px;top:95px;" width="7" height="4" viewBox="0 0 7 4"><path d="M0.8 3.2 L3.5 0.6 L6.2 3.2Z" fill="#333"/></svg>
<svg class="a" style="left:635px;top:303px;" width="7" height="4" viewBox="0 0 7 4"><path d="M0.8 0.8 L3.5 3.4 L6.2 0.8Z" fill="#333"/></svg>
<div class="a" style="left:634.3px;top:276.4px;width:8.5px;height:23px;background:linear-gradient(90deg,#f6f6f6,#dadada);border:1px solid #8e8e8e;border-radius:1.5px"></div>
<div class="a" style="left:636.5px;top:285.5px;width:4px;height:0.8px;background:#555"></div>
<div class="a" style="left:636.5px;top:287.5px;width:4px;height:0.8px;background:#555"></div>
<div class="a" style="left:636.5px;top:289.5px;width:4px;height:0.8px;background:#555"></div>
<div class="a" style="left:128px;top:310px;width:516px;height:10.5px;background:#ececee"></div>
<div class="a" style="left:127.5px;top:309.2px;width:10.3px;height:10px;background:linear-gradient(#f8f8f8,#e4e4e4);border:1px solid #f4f4f4;border-right:1px solid #606060;border-bottom:1px solid #606060"></div>
<div class="a" style="left:130px;top:311px;width:6px;height:1px;background:#222"></div>
<div class="a" style="left:130px;top:312.5px;width:6px;height:0.7px;background:#999"></div>
<div class="a" style="left:138.8px;top:309.2px;width:8px;height:9px;background:#e0e0e2"></div>
<div class="a" style="left:140.5px;top:312.5px;width:5px;height:3.5px;background:#111"></div>
<div class="a" style="left:140px;top:312.8px;width:2px;height:0.8px;background:#eee"></div>
<svg class="a" style="left:149px;top:311px;" width="5" height="7" viewBox="0 0 5 7"><path d="M3.6 1 L1 3.5 L3.6 6Z" fill="#333"/></svg>
<div class="a" style="left:158.5px;top:310px;width:45px;height:9px;background:linear-gradient(#f8f8f8,#d8d8d8);border:1px solid #8c8c8c;border-radius:1.5px"></div>
<div class="a" style="left:180px;top:312.5px;width:0.8px;height:3.5px;background:#555"></div>
<div class="a" style="left:182px;top:312.5px;width:0.8px;height:3.5px;background:#555"></div>
<svg class="a" style="left:627px;top:311px;" width="5" height="7" viewBox="0 0 5 7"><path d="M1 1 L3.6 3.5 L1 6Z" fill="#222"/></svg>
<div class="a" style="left:641px;top:315px;width:1px;height:1px;background:#999"></div>
<div class="a" style="left:641px;top:317px;width:1px;height:1px;background:#999"></div>
<div class="a" style="left:639px;top:317px;width:1px;height:1px;background:#999"></div>
<div class="a" style="left:127px;top:320px;width:518px;height:1px;background:#fbfcfe"></div>
<div class="cl" style="top:90.60px">      .ColumnWidths = &quot;20;20;20&quot;</div>
<div class="cl" style="top:99.99px">      .RowSource = &quot;User!A4:A&quot; &amp; fRow</div>
<div class="cl" style="top:109.37px">    <b>End With</b></div>
<div class="cl" style="top:128.14px">    <b>Dim</b> aRow <b>As Long</b></div>
<div class="cl" style="top:137.53px">    <b>With</b> Worksheets(&quot;ProductList&quot;)</div>
<div class="cl" style="top:146.92px">      aRow = .Range(&quot;A&quot; &amp; Rows.Count).End(xlUp).Row</div>
<div class="cl" style="top:156.30px">    <b>End With</b></div>
<div class="cl" style="top:175.07px">    <b>With</b> ProductCode</div>
<div class="cl" style="top:184.46px">      .ColumnCount = 2</div>
<div class="cl" style="top:193.85px">      .ColumnWidths = &quot;30;30;20&quot;</div>
<div class="cl" style="top:203.23px">      .RowSource = &quot;ProductList!A4:B&quot; &amp; aRow</div>
<div class="cl" style="top:212.62px">    <b>End With</b></div>
<div class="a" style="left:146.2px;top:240px;width:41.8px;height:9.6px;background:#3597fb"></div>
<div class="cl" style="top:240.78px"><span style="color:#f4f8ff">Calendar2</span>.Value = Now</div>
<div class="cl" style="top:250.16px"> OptionButton1 = <b>True</b></div>
<div class="cl" style="top:287.71px"><b>End Sub</b></div>
<div class="a" style="left:0px;top:428px;width:800px;height:24px;background:linear-gradient(90deg,#98a5b8 0px,#a6b8d0 60px,#aabfdc 110px,#aac0dd 643px,#8a9db5 662px,#8195ae 690px,#8195ae 800px)"></div>
<div class="a" style="left:0px;top:428px;width:800px;height:1px;background:#1e3a4a"></div>
<div class="a" style="left:0px;top:429px;width:800px;height:1px;background:rgba(230,238,248,0.55)"></div>
<svg class="a" style="left:4px;top:429.5px;" width="23" height="23" viewBox="0 0 23 23"><defs><radialGradient id="og" cx="50%" cy="80%" r="65%"><stop offset="0" stop-color="#7ef0ff"/><stop offset="0.35" stop-color="#2a9ad8"/><stop offset="0.75" stop-color="#0d4e8e"/><stop offset="1" stop-color="#1a5a92"/></radialGradient><linearGradient id="oh" x1="0" y1="0" x2="0" y2="1"><stop offset="0" stop-color="#fff" stop-opacity="0.55"/><stop offset="1" stop-color="#fff" stop-opacity="0.05"/></linearGradient></defs><circle cx="11.5" cy="11.5" r="10.8" fill="url(#og)" stroke="#c8d8e8" stroke-opacity="0.7" stroke-width="0.8"/><g transform="translate(5.6,3.6) scale(1.12)"><path d="M1 2.2 Q3.4 0.8 5.6 1.8 L4.9 5.6 Q2.7 4.7 0.3 6Z" fill="#f25a22"/><path d="M6.2 2 Q8.6 3.2 11.2 2 L10.5 5.8 Q8 6.9 5.5 5.8Z" fill="#8ac43a"/><path d="M0.2 6.6 Q2.6 5.4 4.8 6.3 L4.1 10.1 Q1.8 9.2 -0.5 10.4Z" fill="#3aa8ec"/><path d="M5.4 6.4 Q7.9 7.6 10.4 6.4 L9.7 10.2 Q7.2 11.3 4.7 10.1Z" fill="#ffc628"/></g><ellipse cx="11.5" cy="7" rx="8.5" ry="5.8" fill="url(#oh)"/></svg>
<svg class="a" style="left:42px;top:430px;" width="22" height="20" viewBox="0 0 22 20"><defs><linearGradient id="ieg" x1="0" y1="0" x2="0" y2="1"><stop offset="0" stop-color="#4ac0f8"/><stop offset="1" stop-color="#0a50b0"/></linearGradient></defs><g transform="translate(10.5,10.5) scale(1.22) translate(-10.7,-10.6)"><path d="M16.6 11.2 H7.6 Q8 14.6 11.2 14.6 Q13.4 14.6 14.6 13 L16.4 14.2 Q14.4 17.2 11 17.2 Q5 17 4.8 10.6 Q5 4.2 11 4 Q16.8 4.2 16.6 11.2Z M7.7 9 H13.8 Q13.5 6.5 10.8 6.5 Q8.2 6.5 7.7 9Z" fill="url(#ieg)"/></g><path d="M2.5 18.5 C0 14.5 7 3.5 16.5 1.5 C20.8 0.8 20.8 3.8 17.5 7" stroke="#f0c030" stroke-width="1.6" fill="none"/></svg>
<svg class="a" style="left:79px;top:433px;" width="18" height="15" viewBox="0 0 18 15"><rect x="1" y="0.5" width="15" height="14" rx="1.5" fill="#8fc4e8" stroke="#6aaad8" stroke-width="0.6"/><rect x="14" y="1" width="3" height="13" fill="#6aa8d4"/><circle cx="8" cy="7.5" r="5.2" fill="#f07a20"/><path d="M6.3 4.6 L11 7.5 L6.3 10.4Z" fill="#fff"/></svg>
<div class="a" style="left:108px;top:429px;width:32px;height:23px;background:linear-gradient(#e2e9f2,#d2dce8 50%,#c9d5e4 55%,#d0dae7);border-left:1px solid #6a7a8e;border-right:1px solid #6a7a8e;border-bottom:1px solid #8a98aa;box-shadow:inset 1px 1px 0 rgba(255,255,255,0.8),inset -1px 0 0 rgba(255,255,255,0.6)"></div>
<div class="a" style="left:140px;top:429px;width:2px;height:23px;background:rgba(235,242,250,0.75)"></div>
<div class="a" style="left:142px;top:429px;width:38px;height:23px;background:linear-gradient(#e2e9f2,#d2dce8 50%,#c9d5e4 55%,#d0dae7);border-left:1px solid #6a7a8e;border-right:1px solid #6a7a8e;border-bottom:1px solid #8a98aa;box-shadow:inset 1px 1px 0 rgba(255,255,255,0.8),inset -1px 0 0 rgba(255,255,255,0.6)"></div>
<div class="a" style="left:180px;top:429px;width:2px;height:23px;background:rgba(235,242,250,0.75)"></div>
<div class="a" style="left:181px;top:429px;width:35px;height:23px;background:linear-gradient(#e2e9f2,#d2dce8 50%,#c9d5e4 55%,#d0dae7);border-left:1px solid #6a7a8e;border-right:1px solid #6a7a8e;border-bottom:1px solid #8a98aa;box-shadow:inset 1px 1px 0 rgba(255,255,255,0.8),inset -1px 0 0 rgba(255,255,255,0.6)"></div>
<div class="a" style="left:216px;top:429px;width:2px;height:23px;background:rgba(235,242,250,0.75)"></div>
<div class="a" style="left:218px;top:429px;width:34px;height:23px;background:linear-gradient(#e2e9f2,#d2dce8 50%,#c9d5e4 55%,#d0dae7);border-left:1px solid #6a7a8e;border-right:1px solid #6a7a8e;border-bottom:1px solid #8a98aa;box-shadow:inset 1px 1px 0 rgba(255,255,255,0.8),inset -1px 0 0 rgba(255,255,255,0.6)"></div>
<div class="a" style="left:252px;top:429px;width:2px;height:23px;background:rgba(235,242,250,0.75)"></div>
<div class="a" style="left:254px;top:429px;width:34px;height:23px;background:linear-gradient(#e2e9f2,#d2dce8 50%,#c9d5e4 55%,#d0dae7);border-left:1px solid #6a7a8e;border-right:1px solid #6a7a8e;border-bottom:1px solid #8a98aa;box-shadow:inset 1px 1px 0 rgba(255,255,255,0.8),inset -1px 0 0 rgba(255,255,255,0.6)"></div>
<div class="a" style="left:288px;top:429px;width:2px;height:23px;background:rgba(235,242,250,0.75)"></div>
<div class="a" style="left:291px;top:429px;width:35px;height:23px;background:linear-gradient(#e2e9f2,#d2dce8 50%,#c9d5e4 55%,#d0dae7);border-left:1px solid #6a7a8e;border-right:1px solid #6a7a8e;border-bottom:1px solid #8a98aa;box-shadow:inset 1px 1px 0 rgba(255,255,255,0.8),inset -1px 0 0 rgba(255,255,255,0.6)"></div>
<div class="a" style="left:326px;top:429px;width:2px;height:23px;background:rgba(235,242,250,0.75)"></div>
<div class="a" style="left:327px;top:429px;width:35px;height:23px;background:linear-gradient(#e2e9f2,#d2dce8 50%,#c9d5e4 55%,#d0dae7);border-left:1px solid #6a7a8e;border-right:1px solid #6a7a8e;border-bottom:1px solid #8a98aa;box-shadow:inset 1px 1px 0 rgba(255,255,255,0.8),inset -1px 0 0 rgba(255,255,255,0.6)"></div>
<div class="a" style="left:362px;top:429px;width:2px;height:23px;background:rgba(235,242,250,0.75)"></div>
<div class="a" style="left:364px;top:429px;width:34px;height:23px;background:linear-gradient(#e2e9f2,#d2dce8 50%,#c9d5e4 55%,#d0dae7);border-left:1px solid #6a7a8e;border-right:1px solid #6a7a8e;border-bottom:1px solid #8a98aa;box-shadow:inset 1px 1px 0 rgba(255,255,255,0.8),inset -1px 0 0 rgba(255,255,255,0.6)"></div>
<div class="a" style="left:398px;top:429px;width:2px;height:23px;background:rgba(235,242,250,0.75)"></div>
<div class="a" style="left:400px;top:429px;width:32px;height:23px;background:linear-gradient(#e2e9f2,#d2dce8 50%,#c9d5e4 55%,#d0dae7);border-left:1px solid #6a7a8e;border-right:1px solid #6a7a8e;border-bottom:1px solid #8a98aa;box-shadow:inset 1px 1px 0 rgba(255,255,255,0.8),inset -1px 0 0 rgba(255,255,255,0.6)"></div>
<div class="a" style="left:432px;top:429px;width:2px;height:23px;background:rgba(235,242,250,0.75)"></div>
<div class="a" style="left:436px;top:429px;width:35px;height:23px;background:linear-gradient(#e2e9f2,#d2dce8 50%,#c9d5e4 55%,#d0dae7);border-left:1px solid #6a7a8e;border-right:1px solid #6a7a8e;border-bottom:1px solid #8a98aa;box-shadow:inset 1px 1px 0 rgba(255,255,255,0.8),inset -1px 0 0 rgba(255,255,255,0.6)"></div>
<div class="a" style="left:471px;top:429px;width:2px;height:23px;background:rgba(235,242,250,0.75)"></div>
<div class="a" style="left:472px;top:429px;width:34px;height:23px;background:linear-gradient(#e2e9f2,#d2dce8 50%,#c9d5e4 55%,#d0dae7);border-left:1px solid #6a7a8e;border-right:1px solid #6a7a8e;border-bottom:1px solid #8a98aa;box-shadow:inset 1px 1px 0 rgba(255,255,255,0.8),inset -1px 0 0 rgba(255,255,255,0.6)"></div>
<div class="a" style="left:506px;top:429px;width:2px;height:23px;background:rgba(235,242,250,0.75)"></div>
<div class="a" style="left:434px;top:430px;width:1px;height:22px;background:rgba(40,60,80,0.5)"></div>
<svg class="a" style="left:114px;top:432px;" width="20" height="17" viewBox="0 0 20 17"><path d="M1 3 H8 L9 1.5 H18 V15 H1Z" fill="#f0d878" stroke="#c8a040" stroke-width="0.6"/><rect x="1" y="5" width="17.5" height="10" fill="#f8e6a0"/><circle cx="5" cy="3" r="1" fill="#3ab040"/><circle cx="10.5" cy="3.8" r="1" fill="#e05030"/><circle cx="14" cy="3.5" r="1" fill="#3a9ae0"/><path d="M4 15 V10 H15 V15 H12.5 V12 H6.5 V15Z" fill="#6ac0f0"/></svg>
<div class="a" style="left:143px;top:430px;width:37px;height:22px;background:linear-gradient(#b8cae0,#aec2dc)"></div>
<svg class="a" style="left:152px;top:431px;" width="20" height="20" viewBox="0 0 20 20"><defs><radialGradient id="fg" cx="45%" cy="45%" r="60%"><stop offset="0" stop-color="#4ab0e8"/><stop offset="0.6" stop-color="#1a5ab8"/><stop offset="1" stop-color="#1a2a78"/></radialGradient><linearGradient id="ff" x1="0" y1="0" x2="0.3" y2="1"><stop offset="0" stop-color="#f89020"/><stop offset="0.7" stop-color="#e8501a"/><stop offset="1" stop-color="#d8401a"/></linearGradient></defs><circle cx="11" cy="9" r="7.2" fill="url(#fg)"/><path d="M15.5 3.5 C18.5 6 19 11 17 14 C15 17.5 11 18.8 7.5 18 C3.5 17 1 13.5 1.2 9.5 C1.4 6.5 3 4 5 3 C4.5 4.5 4.8 6 6 7 C6.2 5.5 7.5 4.5 8.5 4.5 C8 5.5 8.2 7 9 8 C9 10.5 8 11 7.5 12 C9 13.5 12 13.8 14.5 12 C16.8 10.2 17 6.5 15.5 3.5Z" fill="url(#ff)"/><path d="M17 5.5 C18.5 8 18.6 11.5 17.2 14" stroke="#ffd040" stroke-width="1.1" fill="none"/></svg>
<svg class="a" style="left:189px;top:432px;" width="19" height="18" viewBox="0 0 19 18"><circle cx="9.5" cy="9" r="8.3" fill="#0f9d58"/><path d="M9.5 9 L2.3 4.85 A8.3 8.3 0 0 1 16.7 4.85 Z" fill="#db4437"/><path d="M9.5 0.7 A8.3 8.3 0 0 1 16.7 4.85 L9.5 9Z" fill="#db4437"/><path d="M9.5 9 L16.7 4.85 A8.3 8.3 0 0 1 9.5 17.3Z" fill="#f4c400"/><path d="M2.3 4.85 A8.3 8.3 0 0 1 9.5 0.7 L9.5 9Z" fill="#db4437"/><circle cx="9.5" cy="9" r="4" fill="#fff"/><circle cx="9.5" cy="9" r="3" fill="#4a8af4"/></svg>
<svg class="a" style="left:224px;top:432px;" width="22" height="17" viewBox="0 0 22 17"><rect x="2" y="3" width="8" height="9" fill="#a8e090" transform="rotate(-15 6 7)"/><rect x="5" y="6" width="7" height="8" fill="#a8d8f4"/><rect x="8" y="4" width="10" height="10" fill="#fbe46a" stroke="#e8c840" stroke-width="0.4" transform="rotate(-12 13 9)"/></svg>
<svg class="a" style="left:262px;top:431px;" width="20" height="19" viewBox="0 0 20 19"><rect x="1" y="2" width="17" height="11" rx="1" fill="#5aaae8" stroke="#2a6ab0" stroke-width="0.6"/><circle cx="5" cy="6" r="2" fill="#f0c040"/><rect x="9" y="5" width="7" height="1.3" fill="#fff"/><rect x="9" y="8" width="7" height="1.3" fill="#fff"/><ellipse cx="8" cy="15" rx="4" ry="3" fill="#e8e8e8" stroke="#a8a8a8" stroke-width="0.6"/></svg>
<svg class="a" style="left:299px;top:432px;" width="18" height="16" viewBox="0 0 18 16"><rect x="0.5" y="0.5" width="17" height="15" fill="#8cc63f"/><rect x="2" y="2" width="14" height="12" fill="#1a2a10"/><text x="9" y="11.2" font-family="Liberation Sans" font-weight="bold" font-size="8.2" fill="#8cc63f" text-anchor="middle">Dw</text></svg>
<svg class="a" style="left:334px;top:431px;" width="20" height="20" viewBox="0 0 20 20"><circle cx="10" cy="10" r="9.2" fill="#1a50c8"/><circle cx="10" cy="10" r="7.6" fill="#f4f6fa"/><path d="M3 13.5 C6 12.5 10 13 13 11.5 C15 10.5 16.5 10.8 17.6 11 C17 15 13.8 17.6 10 17.6 C6.6 17.6 4 16 3 13.5Z" fill="#1a2a88"/><path d="M2.5 8 C5 6 9 5 13 5.5 M3 10.5 C6 9 10 8.6 13 9" stroke="#3a5ab8" stroke-width="0.9" fill="none"/><path d="M12 5.2 C15 5 17.5 6 19.2 8.3 L15.5 9.2 C14.5 8.5 13.5 8.2 12.5 8.2Z" fill="#f4a020"/><circle cx="12.8" cy="6.6" r="0.8" fill="#222"/></svg>
<svg class="a" style="left:370px;top:431px;" width="21" height="18" viewBox="0 0 21 18"><path d="M3 1 H17 V13.5 L13.5 17 H3Z" fill="#fafcff" stroke="#8aa4cc" stroke-width="0.7"/><path d="M3 12.5 C8 15 12 11.5 18 13.5 L13.5 17 H3Z" fill="#c8dcf4"/><text x="9.8" y="12.8" font-family="Liberation Sans" font-weight="bold" font-size="14" fill="#1a48a8" text-anchor="middle" transform="scale(1,0.95)">W</text></svg>
<svg class="a" style="left:406px;top:431px;" width="19" height="17" viewBox="0 0 19 17"><defs><linearGradient id="npg" x1="0" y1="0" x2="1" y2="1"><stop offset="0" stop-color="#c8f0fa"/><stop offset="1" stop-color="#3aa4c8"/></linearGradient></defs><path d="M9 1.5 L16.5 3 L17 15.5 L13 15.8Z" fill="#f4ecd0" stroke="#c8b888" stroke-width="0.5"/><path d="M6 1 L15 2.5 L12 16 L1.5 13.5Z" fill="url(#npg)" stroke="#4a9ab8" stroke-width="0.5"/></svg>
<div class="a" style="left:437px;top:430px;width:34px;height:22px;background:linear-gradient(#b8cae0,#aec2dc)"></div>
<svg class="a" style="left:446px;top:432px;" width="17" height="16" viewBox="0 0 17 16"><rect x="0.5" y="0.5" width="16" height="15" fill="#0a1a5a" stroke="#4a6ad0" stroke-width="1"/><text x="8.5" y="11.3" font-family="Liberation Sans" font-weight="bold" font-size="8.5" fill="#b0c8ff" text-anchor="middle">Ps</text></svg>
<svg class="a" style="left:478px;top:431px;" width="19" height="18" viewBox="0 0 19 18"><rect x="3" y="1" width="14" height="16" fill="#fff" stroke="#90b890" stroke-width="0.7"/><path d="M2 2 H11 V14 H2Z" fill="#d8f0d8"/><path d="M3.5 3.5 L9.5 12.5 M9.5 3.5 L3.5 12.5" stroke="#1a7a30" stroke-width="2.4"/><path d="M10 9 L17 11 V15 L10 13Z" fill="#b8e0b8"/></svg>
<div class="t" style="left:671.8px;top:435.4px;font-size:7px;color:#e4e8ee;transform:scaleX(0.86);transform-origin:0 0">EN</div>
<svg class="a" style="left:690px;top:439px;" width="6" height="4" viewBox="0 0 6 4"><path d="M0.5 3.5 L3 0.8 L5.5 3.5Z" fill="#f4f6f8"/></svg>
<svg class="a" style="left:702px;top:436px;" width="12" height="11" viewBox="0 0 12 11"><path d="M1.3 0.5 V10" stroke="#555" stroke-width="1.1"/><path d="M2 1 H8 L7.2 3.2 L8.5 5.5 H2Z" fill="#f8f8f8" stroke="#999" stroke-width="0.4"/><circle cx="8.2" cy="7.6" r="3" fill="#e02828" stroke="#f4f4f4" stroke-width="0.6"/><path d="M7 6.4 L9.4 8.8 M9.4 6.4 L7 8.8" stroke="#fff" stroke-width="0.9"/></svg>
<svg class="a" style="left:716px;top:435px;" width="12" height="12" viewBox="0 0 12 12"><rect x="2.6" y="2.6" width="8.3" height="6.6" fill="#5a6474" stroke="#f4f4f4" stroke-width="1.1"/><path d="M1 0.5 V4 M0 1.5 H3" stroke="#f0f0f0" stroke-width="1.1"/><rect x="1.5" y="9.6" width="10" height="1.4" fill="#e8e8e8"/></svg>
<svg class="a" style="left:730px;top:435px;" width="12" height="12" viewBox="0 0 12 12"><path d="M1 4 H3.5 L6.5 1.2 V10.8 L3.5 8 H1Z" fill="#f4f4f4" stroke="#999" stroke-width="0.4"/><path d="M8 4 L10.5 8 M10.5 4 L8 8" stroke="#c8ccd4" stroke-width="0.8"/></svg>
<div class="a" style="left:746px;top:431px;width:1px;height:20px;background:rgba(255,255,255,0.28)"></div>
<div class="t" style="left:755px;top:432.64px;font-size:7.4px;color:#eef2f6;transform:scaleX(0.9);transform-origin:0 0;">3:49 PM</div>
<div class="t" style="left:750px;top:442.74px;font-size:7.4px;color:#eef2f6;transform:scaleX(0.9);transform-origin:0 0;">06-06-2017</div>
<div class="a" style="left:792px;top:429px;width:8px;height:23px;background:linear-gradient(90deg,#6b7d92,#5e6f84);border-left:1px solid #a8b8c8"></div>
<div class="a" style="left:717px;top:417px;width:76.5px;height:11.5px;background:linear-gradient(#ffffff,#e6e8f0);border:1px solid #787878;border-radius:1.5px"></div>
<div class="t" style="left:720.5px;top:419.11px;font-size:6.48px;color:#474747;font-family:'Liberation Sans',sans-serif;">Tuesday, June 06, 2017</div>
</body></html>
